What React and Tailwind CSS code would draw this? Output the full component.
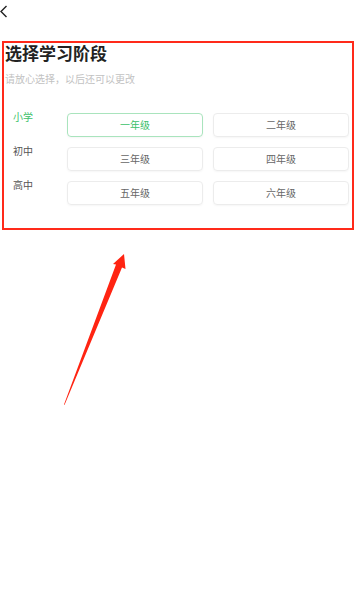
import React, { useState } from "react";

const stages = [
  { id: "primary", label: "小学", grades: ["一年级", "二年级"] },
  { id: "middle", label: "初中", grades: ["三年级", "四年级"] },
  { id: "high", label: "高中", grades: ["五年级", "六年级"] },
];

const App = () => {
  const [selected, setSelected] = useState("一年级");

  const activeStage = stages.find((s) => s.grades.includes(selected))?.id;

  return (
    <div
      className="relative w-[356px] h-[600px] bg-white overflow-hidden"
      style={{ fontFamily: '"Noto Sans CJK SC", "Noto Sans", sans-serif' }}
    >
      <div className="h-[41px] pt-[5px]">
        <svg width="8" height="13" viewBox="0 0 8 13" className="block">
          <path d="M6.5 1 L1 6.5 L6.5 12" fill="none" stroke="#222" strokeWidth="1.4" />
        </svg>
      </div>

      <div className="mx-[2px] w-[352px] h-[189px] border-2 border-[#ff2a1a]">
        <h1 className="-mt-[1px] pl-[1px] text-[17px] leading-[22px] font-bold text-[#222]">选择学习阶段</h1>
        <p className="mt-[8px] pl-[1px] text-[10px] leading-[14px] text-[#c2c2c2]">请放心选择，以后还可以更改</p>

        <div className="mt-[27px] flex flex-col gap-[10px]">
          {stages.map((s) => (
            <div key={s.id} className="flex items-start">
              <div
                className={`w-[63px] pl-[9px] -mt-[3px] text-[10px] leading-[14px] ${
                  activeStage === s.id ? "text-[#3cbf6a]" : "text-[#555]"
                }`}
              >
                {s.label}
              </div>
              <div className="flex gap-[10px]">
                {s.grades.map((g) => (
                  <button
                    key={g}
                    onClick={() => setSelected(g)}
                    className={`w-[136px] h-[24px] rounded-[4px] border text-[10px] leading-[14px] shadow-[0_1px_2px_rgba(0,0,0,0.04)] ${
                      selected === g
                        ? "border-[#a9e4bd] text-[#3cbf6a]"
                        : "border-[#ececec] text-[#666]"
                    }`}
                  >
                    {g}
                  </button>
                ))}
              </div>
            </div>
          ))}
        </div>
      </div>

      <svg
        className="absolute left-0 top-0 pointer-events-none"
        width="356"
        height="600"
        viewBox="0 0 356 600"
      >
        <polygon
          points="124,254 125.5,269 122,267.5 64.5,405 64,404.5 116,264.5 113,264"
          fill="#ff2412"
        />
      </svg>
    </div>
  );
};

export default App;
